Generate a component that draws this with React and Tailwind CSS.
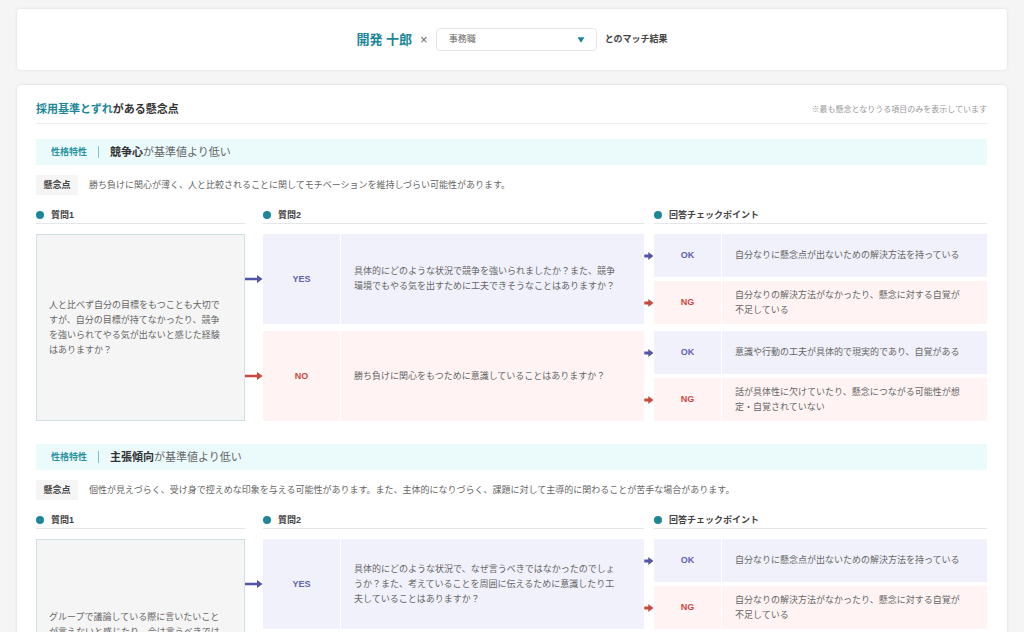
import React from "react";

const concerns = [
    {
        category: "性格特性",
        trait: "競争心",
        note: "勝ち負けに関心が薄く、人と比較されることに関してモチベーションを維持しづらい可能性があります。",
        question: "人と比べず自分の目標をもつことも大切ですが、自分の目標が持てなかったり、競争を強いられてやる気が出ないと感じた経験はありますか？",
        branches: [
            {
                answer: "YES",
                text: "具体的にどのような状況で競争を強いられましたか？また、競争環境でもやる気を出すために工夫できそうなことはありますか？",
                ok: "自分なりに懸念点が出ないための解決方法を持っている",
                ng: "自分なりの解決方法がなかったり、懸念に対する自覚が不足している",
            },
            {
                answer: "NO",
                text: "勝ち負けに関心をもつために意識していることはありますか？",
                ok: "意識や行動の工夫が具体的で現実的であり、自覚がある",
                ng: "話が具体性に欠けていたり、懸念につながる可能性が想定・自覚されていない",
            },
        ],
    },
    {
        category: "性格特性",
        trait: "主張傾向",
        note: "個性が見えづらく、受け身で控えめな印象を与える可能性があります。また、主体的になりづらく、課題に対して主導的に関わることが苦手な場合があります。",
        question: "グループで議論している際に言いたいことが言えないと感じたり、今は言うべきではないと思った経験はありますか？",
        branches: [
            {
                answer: "YES",
                text: "具体的にどのような状況で、なぜ言うべきではなかったのでしょうか？また、考えていることを周囲に伝えるために意識したり工夫していることはありますか？",
                ok: "自分なりに懸念点が出ないための解決方法を持っている",
                ng: "自分なりの解決方法がなかったり、懸念に対する自覚が不足している",
            },
            {
                answer: "NO",
                text: "自分の意見を伝えるために意識していることはありますか？",
                ok: "意識や行動の工夫が具体的で現実的であり、自覚がある",
                ng: "話が具体性に欠けていたり、懸念につながる可能性が想定・自覚されていない",
            },
        ],
    },
];

const GRID = "grid grid-cols-[209fr_18px_381fr_10px_333fr]";

const toneColors = {
    blue: { bg: "bg-[#f0f1fa]", text: "text-[#6260b4]", fill: "fill-[#5254a6]" },
    red: { bg: "bg-[#fff4f3]", text: "text-[#d0473f]", fill: "fill-[#c8473f]" },
};

function LongArrow({ tone }) {
    return (
        <svg viewBox="0 0 18 8" className={`h-2 w-[18px] ${toneColors[tone].fill}`} aria-hidden="true">
            <path d="M0 2.8h12V0L17.6 4L12 8V5.2H0z" />
        </svg>
    );
}

function ShortArrow({ tone }) {
    return (
        <svg viewBox="0 0 10 8" className={`h-2 w-[10px] ${toneColors[tone].fill}`} aria-hidden="true">
            <path d="M0.3 2.6h4V0L9.4 4L4.3 8V5.4H0.3z" />
        </svg>
    );
}

function ColumnHead({ children }) {
    return (
        <h4 className="flex h-[17px] items-center gap-[7px] border-b border-[#e4e6ea] text-[9px] font-bold text-[#444]">
            <span className="size-2 rounded-full bg-[#1b8797]" />
            {children}
        </h4>
    );
}

function CheckPoint({ tone, label, text }) {
    const colors = toneColors[tone];
    return (
        <div className="flex min-h-[43px] flex-1 gap-px">
            <div className={`flex w-[67px] shrink-0 items-center justify-center font-bold ${colors.bg} ${colors.text}`}>
                {label}
            </div>
            <div className={`flex flex-1 items-center pl-[13px] ${colors.bg}`}>
                <p className="max-w-[25em]">{text}</p>
            </div>
        </div>
    );
}

function ConcernSection({ item }) {
    return (
        <section>
            <div className="flex h-[26px] items-center bg-[#ebfafb] px-[15px]">
                <span className="text-[9px] font-bold text-[#2b94a1]">{item.category}</span>
                <span className="mx-[11px] h-3 w-px bg-[#7cc3ca]" />
                <h3 className="text-[11px] text-[#666]">
                    <b className="text-[#333]">{item.trait}</b>が基準値より低い
                </h3>
            </div>

            <div className="mt-[10px] flex items-center gap-[11px]">
                <span className="flex h-5 w-[42px] shrink-0 items-center justify-center bg-[#f5f5f5] font-bold text-[#444]">
                    懸念点
                </span>
                <p>{item.note}</p>
            </div>

            <div className={`mt-3 ${GRID}`}>
                <ColumnHead>質問1</ColumnHead>
                <span />
                <ColumnHead>質問2</ColumnHead>
                <span />
                <ColumnHead>回答チェックポイント</ColumnHead>
            </div>

            <div className={`mt-[10px] ${GRID}`}>
                <div className="flex items-center border border-[#cfe0e2] bg-[#f5f5f5] pl-3">
                    <p className="max-w-[19em]">{item.question}</p>
                </div>

                <div className="flex flex-col gap-[7px]">
                    <div className="flex flex-1 items-center">
                        <LongArrow tone="blue" />
                    </div>
                    <div className="flex flex-1 items-center">
                        <LongArrow tone="red" />
                    </div>
                </div>

                <div className="flex flex-col gap-[7px]">
                    {item.branches.map((branch) => {
                        const colors = toneColors[branch.answer === "YES" ? "blue" : "red"];
                        return (
                            <div key={branch.answer} className="flex min-h-[90px] flex-1 gap-px">
                                <div
                                    className={`flex w-[77px] shrink-0 items-center justify-center font-bold ${colors.bg} ${colors.text}`}
                                >
                                    {branch.answer}
                                </div>
                                <div className={`flex flex-1 items-center pl-[13px] ${colors.bg}`}>
                                    <p className="max-w-[29em]">{branch.text}</p>
                                </div>
                            </div>
                        );
                    })}
                </div>

                <div className="flex flex-col gap-[7px]">
                    {item.branches.map((branch) => (
                        <div key={branch.answer} className="flex flex-1 flex-col gap-1">
                            <div className="flex flex-1 items-center">
                                <ShortArrow tone="blue" />
                            </div>
                            <div className="flex flex-1 items-center">
                                <ShortArrow tone="red" />
                            </div>
                        </div>
                    ))}
                </div>

                <div className="flex flex-col gap-[7px]">
                    {item.branches.map((branch) => (
                        <div key={branch.answer} className="flex flex-1 flex-col gap-1">
                            <CheckPoint tone="blue" label="OK" text={branch.ok} />
                            <CheckPoint tone="red" label="NG" text={branch.ng} />
                        </div>
                    ))}
                </div>
            </div>
        </section>
    );
}

function App() {
    return (
        <div className="min-h-screen bg-[#f5f5f5] px-[17px] py-[9px] font-['Liberation_Sans','Noto_Sans_CJK_JP',sans-serif] text-[9px] leading-[15px] text-[#666]">
            {/* Header */}
            <header className="flex h-[61px] items-center justify-center gap-2 rounded bg-white shadow-[0_0_3px_rgba(0,0,0,0.12)]">
                <h1 className="text-[13px] font-bold text-[#1b8797]">開発 十郎</h1>
                <span className="text-[13px]">×</span>
                <div className="relative">
                    <select
                        aria-label="職種"
                        className="block h-[23px] w-[161px] appearance-none rounded border border-[#e6e6e6] bg-white pl-3 text-[9px] text-[#666]"
                    >
                        <option>事務職</option>
                    </select>
                    <svg
                        viewBox="0 0 8 6"
                        className="pointer-events-none absolute right-3 top-[9px] h-[6px] w-2 fill-[#1b8797]"
                        aria-hidden="true"
                    >
                        <path d="M0.5 0.3h7L4 5.8z" />
                    </svg>
                </div>
                <p className="font-bold text-[#444]">とのマッチ結果</p>
            </header>

            {/* Concerns */}
            <main className="mt-[15px] rounded bg-white pt-[17px] pr-5 pb-6 pl-[19px] shadow-[0_0_3px_rgba(0,0,0,0.12)]">
                <div className="flex h-[22px] items-start justify-between border-b border-[#eee]">
                    <h2 className="text-[11px] font-bold text-[#333]">
                        <span className="text-[#1b8797]">採用基準とずれ</span>がある懸念点
                    </h2>
                    <p className="text-[8px] text-[#999]">※最も懸念となりうる項目のみを表示しています</p>
                </div>
                <div className="mt-[15px] space-y-[23px]">
                    {concerns.map((item) => (
                        <ConcernSection key={item.trait} item={item} />
                    ))}
                </div>
            </main>
        </div>
    );
}

export default App;
